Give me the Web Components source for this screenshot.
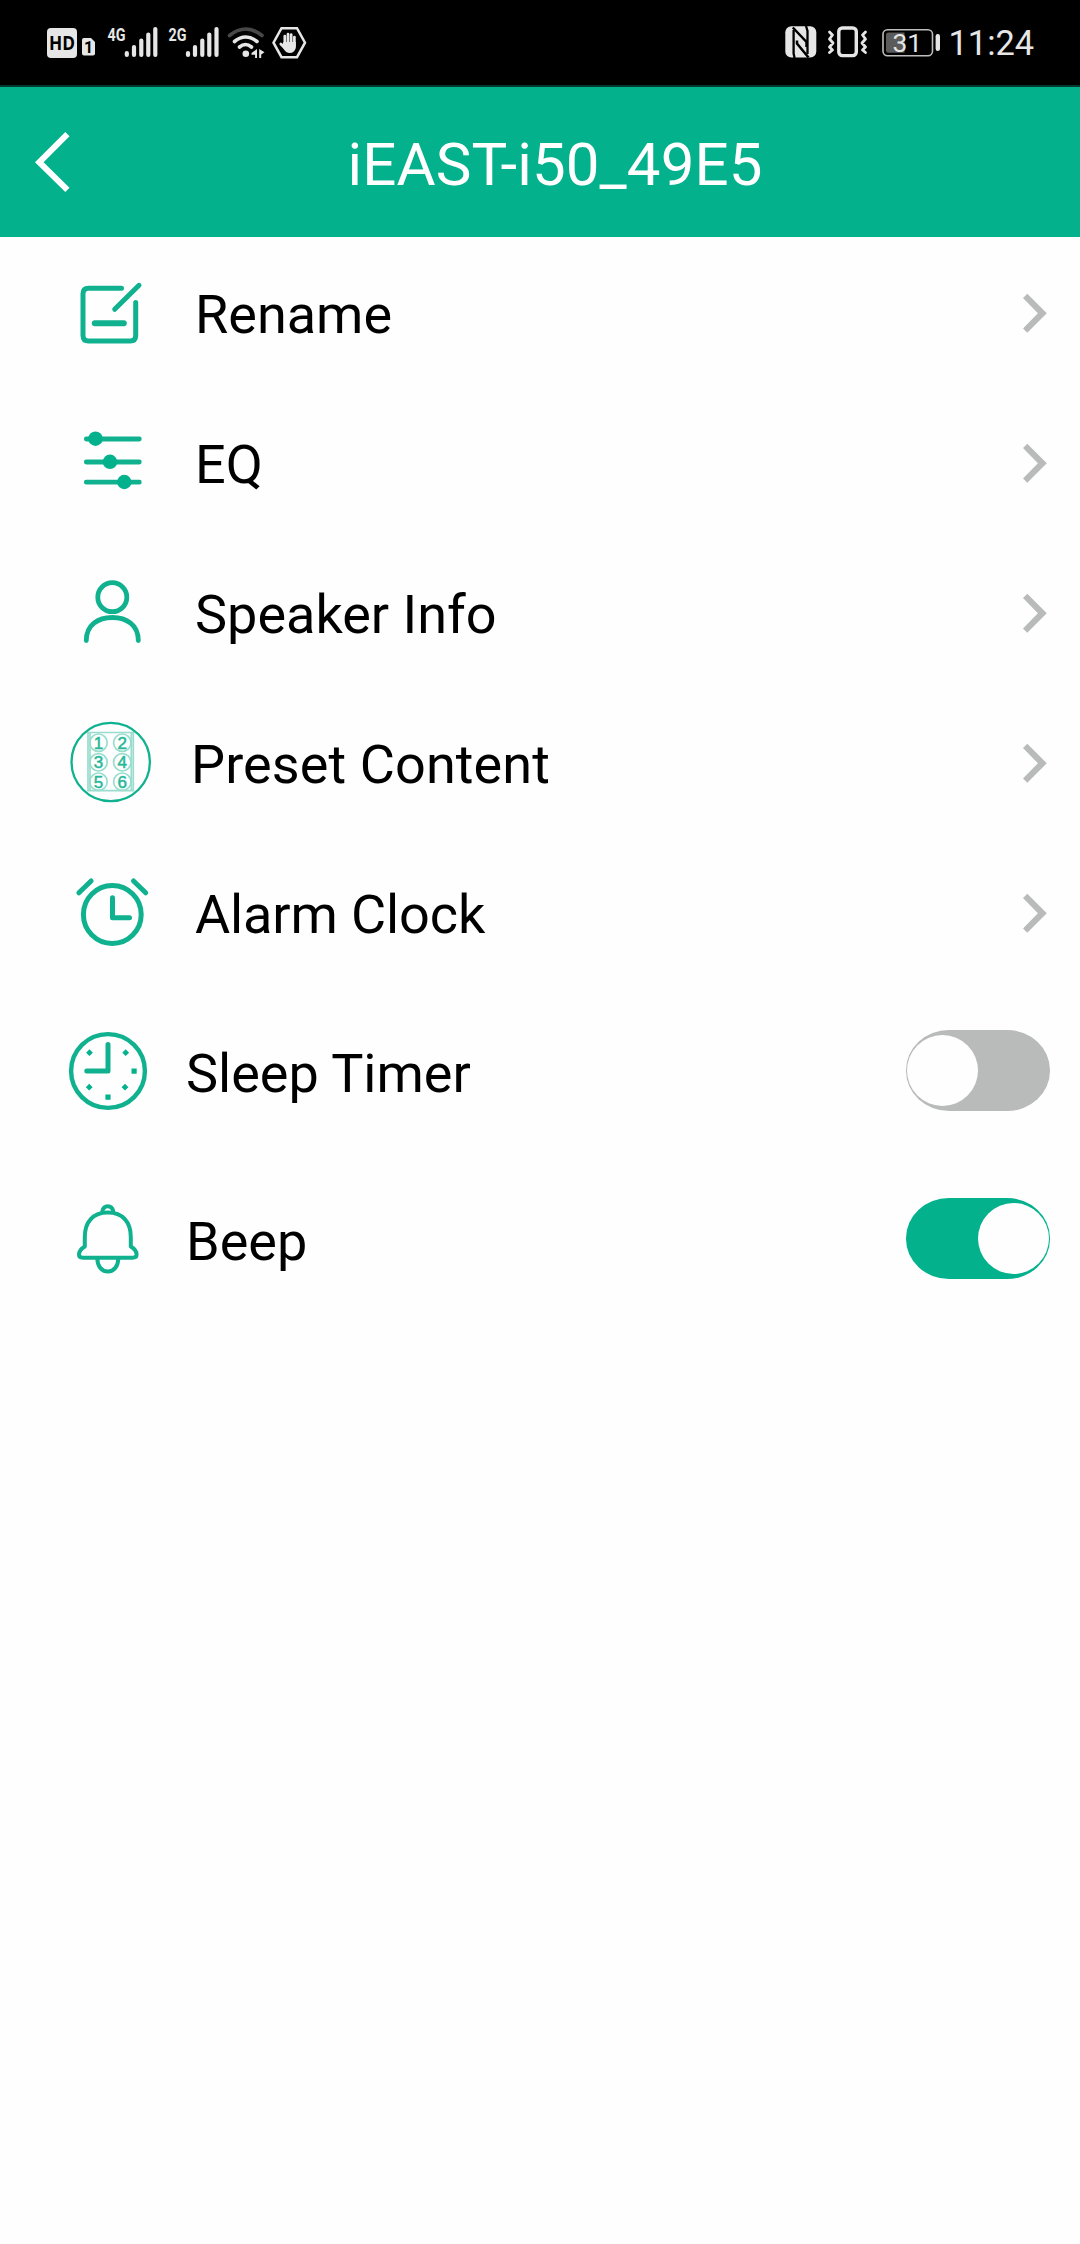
<!DOCTYPE html>
<html lang="en">
<head>
<meta charset="utf-8">
<title>Speaker settings</title>
<style>
  html, body { margin: 0; background: #fefefe; }
  body { font-family: Roboto, "Liberation Sans", sans-serif; color: #000; }
</style>
</head>
<body>
<settings-screen></settings-screen>
<script>
const define = (name, html) => {
  const t = document.createElement('template');
  t.innerHTML = html;
  customElements.define(name, class extends HTMLElement {
    constructor() {
      super();
      this.attachShadow({ mode: 'open' }).append(t.content.cloneNode(true));
    }
  });
};

define('status-bar', `
<style>
  :host { display: flex; justify-content: space-between; height: 85px; border-bottom: 2px solid #02382d; background: #000; color: #e6e6e6; }
  svg { display: block; fill: #e6e6e6; }
  .right { display: flex; }
  .time { width: 132px; font-size: 34.4px; line-height: 86px; height: 85px; white-space: nowrap; text-indent: .5px; }
</style>
<svg width="330" height="85" viewBox="0 0 330 85">
  <rect x="47" y="28" width="30" height="30" rx="4"/>
  <text x="49" y="50" font-family="Open Sans" font-weight="700" font-size="19" fill="#000" textLength="26" lengthAdjust="spacingAndGlyphs">HD</text>
  <path d="M84 38h7l4 4v11.500q0 2-2 2h-9q-2 0-2-2V40q0-2 2-2z"/>
  <text x="84" y="53" font-weight="700" font-size="16" fill="#000">1</text>
  <text x="107.500" y="40.500" font-weight="700" font-size="18.500" textLength="18" lengthAdjust="spacingAndGlyphs">4G</text>
  <text x="168.500" y="40.500" font-weight="700" font-size="18.500" textLength="18" lengthAdjust="spacingAndGlyphs">2G</text>
  <g stroke="#e6e6e6" stroke-width="4.200" stroke-linecap="round">
    <path d="M126.800 53v2M134 47v8M141.300 40.500v14.500M148.300 34.500v20.500M155.300 29v26"/>
    <path d="M188 53v2M195 47v8M202.300 40.500v14.500M209.300 34.500v20.500M216.500 29v26"/>
  </g>
  <g fill="none" stroke-linecap="round">
    <path d="M229.500 35.500Q245.500 22.500 262 35.500" stroke="#484848" stroke-width="3.600"/>
    <path d="M234.500 41.500Q245.500 32.500 257 41.500M239.500 47Q245.500 42 251.500 47" stroke="#e6e6e6" stroke-width="3.600"/>
  </g>
  <circle cx="245.800" cy="53.700" r="3.300"/>
  <path d="M257 49v9h-1.900v-3.300h-3.600V53zM259.200 49l5.300 3.300-3.300 2.200V58h-2z"/>
  <path d="M281.500 28.200h15.500l8 14.500-8 14.500h-15.500l-8-14.500z" fill="none" stroke="#e6e6e6" stroke-width="2.500"/>
  <g stroke="#e6e6e6" stroke-width="2.700" stroke-linecap="round" fill="none">
    <path d="M284.800 36v9M288 34v10M291.200 34.500v10M294.400 37v9M280.800 44l4 4"/>
  </g>
  <path d="M283.400 42h12.400v6q-1.500 5-6 5-3.500 0-5.500-3l-2.500-4z"/>
</svg>
<div class="right">
  <svg width="180" height="85" viewBox="768 0 180 85">
    <rect x="785.300" y="26.300" width="31" height="31.300" rx="6"/>
    <path d="M793.600 30v23.500l1 4.500M807.500 54V31l-1.500-5" fill="none" stroke="#000" stroke-width="2.300"/>
    <path d="M792.800 27.500l13.700 14.500v5M808.500 57.500L797 43.500v-3" fill="none" stroke="#000" stroke-width="2.500"/>
    <rect x="838.800" y="28" width="17.500" height="27.600" rx="3.500" fill="none" stroke="#e6e6e6" stroke-width="3.400"/>
    <path d="M829.500 32l3 3-3 4 3.500 4-3.500 4 3 3-3 2.500M865.500 32l-3 3 3 4-3.500 4 3.500 4-3 3 3 2.500" fill="none" stroke="#e6e6e6" stroke-width="2.800" stroke-linejoin="round" stroke-linecap="round"/>
    <rect x="883" y="29.700" width="49.500" height="26" rx="4.500" fill="none" stroke="#bdbdbd" stroke-width="1.600"/>
    <path d="M888.500 32.500h16v20.300h-16q-2.500 0-2.500-2.500V35q0-2.500 2.500-2.500z" fill="#5b5b5b"/>
    <rect x="935.600" y="34" width="4.400" height="17" rx="2.200"/>
    <text x="892.600" y="51.500" font-size="26.300" textLength="29.500">31</text>
  </svg>
  <div class="time">11:24</div>
</div>`);

define('app-header', `
<style>
  :host { display: flex; height: 150px; background: #04b18d; color: #fff; }
  svg { display: block; flex: none; }
  .title { flex: 1; margin-right: 50px; padding-top: 2px; text-align: center; font-size: 60px; letter-spacing: .12px; line-height: 151px; height: 148px; white-space: nowrap; }
</style>
<svg width="80" height="150" viewBox="0 87 80 150"><path fill="#fff" d="M65.300 132l4.200 4.300-25.900 26 25.900 25.500-4.200 4.200L35 162.300z"/></svg>
<div class="title"><slot></slot></div>`);

define('settings-row', `
<style>
  :host { display: flex; height: var(--row, 150px); align-items: center; }
  .icon { flex: none; height: 100%; width: var(--lead, 195px); }
  .label { flex: 1; font-size: 54px; letter-spacing: var(--track, 0); line-height: 64px; padding-top: 5px; white-space: nowrap; }
</style>
<div class="icon"><slot name="icon"></slot></div>
<div class="label"><slot></slot></div>
<slot name="action"></slot>`);

define('row-chevron', `
<style>:host { display: block; width: 57px; height: 150px; } svg { display: block; }</style>
<svg width="57" height="150" viewBox="1023 237 57 150"><path fill="#b9bbba" d="M1027.300 293.700l19.500 19.600-19.500 19.500-4.300-4.300 14.900-15.200L1023 298z"/></svg>`);

customElements.define('toggle-switch', class extends HTMLElement {
  connectedCallback() {
    const on = this.hasAttribute('on');
    this.attachShadow({ mode: 'open' }).innerHTML = `
    <style>
      :host { display: flex; align-items: center; box-sizing: border-box; width: 144px; height: 80.500px; margin: 0 30px 1.500px 0; border-radius: 43px / 40px;
        background: ${on ? '#04b18d' : '#b9bbba'}; justify-content: ${on ? 'flex-end' : 'flex-start'}; padding: 0 .6px; }
      i { width: 71.500px; height: 71.500px; border-radius: 50%; background: #fefefe; }
    </style><i></i>`;
  }
});

const icons = {
  rename: [237, 150, `<g stroke-width="5"><path d="M121.500 288.300H88.500q-5.500 0-5.500 5.500v41.700q0 5.500 5.500 5.500h41.700q5.500 0 5.500-5.500V302.500"/><path d="M114.700 309.300L139 285.300"/><path d="M94.800 323.300h29" stroke-width="6"/></g>`],
  eq: [387, 150, `<path d="M86.300 439h53M86.300 462h53M86.300 482.200h53" stroke-width="4.800"/><g fill="#04b18d" stroke="none"><circle cx="95.500" cy="438.700" r="7.200"/><circle cx="110" cy="461.800" r="7.200"/><circle cx="124.300" cy="482" r="7.200"/></g>`],
  person: [537, 150, `<g stroke-width="4.800"><circle cx="112.300" cy="597.200" r="14.500"/><path d="M86.300 640.500C86.300 625 98 617.500 112.300 617.500S138.300 625 138.300 640.500"/></g>`],
  preset: [687, 150, `<circle cx="110.700" cy="762" r="39.200" stroke-width="2.300"/><g stroke-width="1.700" opacity=".42"><path d="M88 732.500h45.300v58.200H88zM90 732.500v58.200M131.300 732.500v58.200"/>${[742.7,762.3,781.7].map(y=>`<circle cx="98.500" cy="${y}" r="8.700"/><circle cx="122.300" cy="${y}" r="8.700"/>`).join('')}</g><g fill="#28b898" stroke="#28b898" stroke-width=".5" font-family="Liberation Sans" font-size="17" text-anchor="middle">${[1,2,3,4,5,6].map(n=>`<text x="${n%2?98.5:122.3}" y="${[748.7,768.3,787.7][(n-1)>>1]}">${n}</text>`).join('')}</g>`],
  alarm: [837, 150, `<g stroke-width="5"><circle cx="112.300" cy="914.500" r="28.900"/><path d="M112.500 897.800v19.900h17"/><path d="M78.900 892.800l12.200-11.800M133.500 881l12.200 11.800"/></g>`],
  timer: [987, 168, `<circle cx="108" cy="1071" r="36.900" stroke-width="4.400"/><path d="M108 1044.500V1071H86.800" stroke-width="5"/><g fill="#04b18d" stroke="none"><path d="M89.500 1049.300l3.400 3.400-3.400 3.400-3.400-3.400zM125.700 1049.300l3.400 3.400-3.400 3.400-3.400-3.400zM125 1083.800l3.400 3.400-3.400 3.400-3.400-3.400zM89.200 1083.800l3.400 3.400-3.400 3.400-3.400-3.400zM131.500 1068.500h5.200v5.200h-5.200zM105.400 1094.500h5.200v5.200h-5.200z"/></g>`],
  bell: [1155, 168, `<g stroke-width="4"><path d="M107.800 1212.500C93 1212.500 84.800 1222 84.800 1237v9.500q-5.800 3.500-5.800 8 0 3.200 4 3.200h49.600q4 0 4-3.200 0-4.500-5.800-8V1237C130.800 1222 122.600 1212.500 107.800 1212.500z"/><path d="M102.300 1211.500q1-5.200 5.500-5.200t5.500 5.200"/><path d="M97.300 1258c0 8 4.200 13.500 10.500 13.500s10.500-5.500 10.500-13.500"/></g>`]
};
customElements.define('row-icon', class extends HTMLElement {
  connectedCallback() {
    const [y, h, body] = icons[this.getAttribute('name')];
    this.attachShadow({ mode: 'open' }).innerHTML = `
    <style>:host { display: block; } svg { display: block; }</style>
    <svg width="186" height="${h}" viewBox="0 ${y} 186 ${h}" fill="none" stroke="#10b18e" stroke-linecap="round" stroke-linejoin="round">${body}</svg>`;
  }
});

define('settings-screen', `
<style>
  :host { display: flex; flex-direction: column; min-height: 2244px; background: #fefefe; }
  .tall { --row: 168px; --lead: 186px; }
  .preset { --lead: 191px; --track: .1px; }
  .tight { --track: -.12px; }
</style>
<status-bar></status-bar>
<app-header>iEAST-i50_49E5</app-header>
<settings-row><row-icon slot="icon" name="rename"></row-icon>Rename<row-chevron slot="action"></row-chevron></settings-row>
<settings-row><row-icon slot="icon" name="eq"></row-icon>EQ<row-chevron slot="action"></row-chevron></settings-row>
<settings-row><row-icon slot="icon" name="person"></row-icon>Speaker Info<row-chevron slot="action"></row-chevron></settings-row>
<settings-row class="preset"><row-icon slot="icon" name="preset"></row-icon>Preset Content<row-chevron slot="action"></row-chevron></settings-row>
<settings-row class="tight"><row-icon slot="icon" name="alarm"></row-icon>Alarm Clock<row-chevron slot="action"></row-chevron></settings-row>
<settings-row class="tall"><row-icon slot="icon" name="timer"></row-icon>Sleep Timer<toggle-switch slot="action"></toggle-switch></settings-row>
<settings-row class="tall"><row-icon slot="icon" name="bell"></row-icon>Beep<toggle-switch slot="action" on></toggle-switch></settings-row>`);
</script>
</body>
</html>
